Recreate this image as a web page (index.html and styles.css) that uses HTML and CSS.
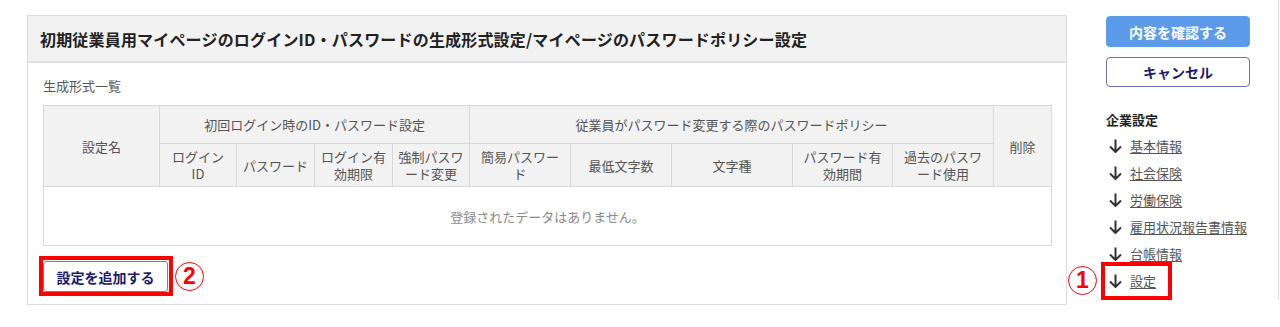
FILE: index.html
```html
<!DOCTYPE html>
<html lang="ja">
<head>
<meta charset="utf-8">
<title>生成形式設定</title>
<link rel="stylesheet" href="styles.css">
</head>
<body>
<div class="page">
  <section class="panel">
    <h1 class="panel-head">初期従業員用マイページのログインID・パスワードの生成形式設定/マイページのパスワードポリシー設定</h1>
    <div class="panel-body">
      <div class="caption">生成形式一覧</div>
      <table class="grid">
        <colgroup>
          <col class="w116"><col class="w77"><col class="w78"><col class="w78"><col class="w77">
          <col class="w101"><col class="w101"><col class="w121"><col class="w100"><col class="w101"><col class="w58">
        </colgroup>
        <thead>
          <tr class="r1">
            <th rowspan="2">設定名</th>
            <th colspan="4">初回ログイン時のID・パスワード設定</th>
            <th colspan="5">従業員がパスワード変更する際のパスワードポリシー</th>
            <th rowspan="2">削除</th>
          </tr>
          <tr class="r2">
            <th>ログイン<br>ID</th>
            <th>パスワード</th>
            <th>ログイン有<br>効期限</th>
            <th>強制パスワ<br>ード変更</th>
            <th>簡易パスワー<br>ド</th>
            <th>最低文字数</th>
            <th>文字種</th>
            <th>パスワード有<br>効期間</th>
            <th>過去のパスワ<br>ード使用</th>
          </tr>
        </thead>
        <tbody>
          <tr class="r3"><td colspan="11">登録されたデータはありません。</td></tr>
        </tbody>
      </table>
      <div class="add-row">
        <div class="mark-box"><button class="btn-add" type="button">設定を追加する</button></div>
        <span class="circ">2</span>
      </div>
    </div>
  </section>
  <aside class="rail">
    <button class="btn-primary" type="button">内容を確認する</button>
    <button class="btn-cancel" type="button">キャンセル</button>
    <div class="nav-title">企業設定</div>
    <ul class="nav">
      <li><svg class="arr" viewBox="0 0 13 14" width="13" height="14"><path d="M6.5 0.5V13M1 7.5l5.5 5.5 5.5-5.5" fill="none" stroke="#333" stroke-width="2"/></svg><a href="#">基本情報</a></li>
      <li><svg class="arr" viewBox="0 0 13 14" width="13" height="14"><path d="M6.5 0.5V13M1 7.5l5.5 5.5 5.5-5.5" fill="none" stroke="#333" stroke-width="2"/></svg><a href="#">社会保険</a></li>
      <li><svg class="arr" viewBox="0 0 13 14" width="13" height="14"><path d="M6.5 0.5V13M1 7.5l5.5 5.5 5.5-5.5" fill="none" stroke="#333" stroke-width="2"/></svg><a href="#">労働保険</a></li>
      <li><svg class="arr" viewBox="0 0 13 14" width="13" height="14"><path d="M6.5 0.5V13M1 7.5l5.5 5.5 5.5-5.5" fill="none" stroke="#333" stroke-width="2"/></svg><a href="#">雇用状況報告書情報</a></li>
      <li><svg class="arr" viewBox="0 0 13 14" width="13" height="14"><path d="M6.5 0.5V13M1 7.5l5.5 5.5 5.5-5.5" fill="none" stroke="#333" stroke-width="2"/></svg><a href="#">台帳情報</a></li>
      <li class="marked"><svg class="arr" viewBox="0 0 13 14" width="13" height="14"><path d="M6.5 0.5V13M1 7.5l5.5 5.5 5.5-5.5" fill="none" stroke="#333" stroke-width="2"/></svg><a href="#">設定</a><span class="mark-frame"></span><span class="circ circ-1">1</span></li>
    </ul>
  </aside>
</div>
</body>
</html>
```
FILE: styles.css
```css
* { box-sizing: border-box; }
html, body { margin: 0; padding: 0; background: #fff; }
body {
  font-family: "Noto Sans CJK JP", "Noto Sans", sans-serif;
  font-size: 13px;
  color: #555;
}
.page {
  display: flex;
  align-items: flex-start;
  padding: 15px 0 0 27px;
  height: 315px;
}
.panel {
  width: 1040px;
  height: 290px;
  border: 1px solid #dcdcdc;
  flex: none;
}
.panel-head {
  margin: 0;
  height: 47px;
  padding: 0 0 0 12px;
  display: flex;
  align-items: center;
  background: #f2f2f2;
  border-bottom: 2px solid #e0e0e0;
  font-size: 16px;
  font-weight: bold;
  color: #222;
  letter-spacing: 0.18px;
}
.panel-body {
  padding: 14px 15px 0 15px;
}
.caption {
  line-height: 18px;
  height: 18px;
  color: #555;
}
.grid {
  margin-top: 10px;
  width: 1008px;
  table-layout: fixed;
  border-collapse: collapse;
}
.w116 { width: 116px; }
.w77 { width: 77px; }
.w78 { width: 78px; }
.w101 { width: 101px; }
.w121 { width: 121px; }
.w100 { width: 100px; }
.w58 { width: 58px; }
.grid th, .grid td {
  border: 1px solid #d9d9d9;
  padding: 0 4px;
  font-weight: normal;
  text-align: center;
  vertical-align: middle;
  line-height: 17px;
  color: #555;
  white-space: nowrap;
}
.grid th { background: #f2f2f2; }
.grid .r1 { height: 38px; }
.grid .r2 { height: 43px; }
.grid .r3 { height: 59px; }
.grid td { color: #8a8a8a; background: #fff; }
.add-row {
  display: flex;
  align-items: center;
  margin-top: 10px;
  margin-left: -4px;
}
.mark-box {
  border: 4px solid #f00;
  padding: 1px 1px 0 0;
}
.btn-add {
  display: block;
  width: 125px;
  height: 31px;
  border: 1px solid #7a7ab8;
  border-radius: 3px;
  background: #fff;
  font-family: inherit;
  font-size: 14px;
  font-weight: bold;
  color: #1c1c6b;
  padding: 0;
}
.circ {
  display: inline-flex;
  align-items: center;
  justify-content: center;
  width: 29px;
  height: 29px;
  border: 1px solid #f00;
  border-radius: 50%;
  color: #f00;
  font-family: "Liberation Sans", sans-serif;
  font-weight: bold;
  font-size: 23px;
  margin-left: 2px;
}
.rail {
  margin-left: 39px;
  width: 173px;
  height: 300px;
  margin-top: -15px;
  padding-top: 16px;
  border-right: 1px solid #dcdcdc;
  display: flex;
  flex-direction: column;
  align-items: flex-start;
}
.btn-primary, .btn-cancel {
  width: 144px;
  font-family: inherit;
  font-size: 14px;
  font-weight: bold;
  border-radius: 4px;
  padding: 0;
}
.btn-primary {
  height: 31px;
  background: #5b9bea;
  border: 1px solid #5b9bea;
  color: #fff;
}
.btn-cancel {
  margin-top: 10px;
  height: 30px;
  background: #fff;
  border: 1px solid #6d6db5;
  color: #1c1c6b;
}
.nav-title {
  margin-top: 24px;
  line-height: 18px;
  font-weight: bold;
  color: #222;
}
.nav {
  list-style: none;
  margin: 3px 0 0;
  padding: 0;
}
.nav li {
  display: flex;
  align-items: center;
  height: 27px;
  padding-left: 3px;
}
.nav .arr { flex: none; margin-right: 8px; }
.nav a {
  color: #555;
  text-decoration: underline;
  text-underline-offset: 2px;
  line-height: 18px;
}
.nav li.marked { position: relative; }
.mark-frame {
  position: absolute;
  left: -5px;
  top: -5px;
  width: 71px;
  height: 38px;
  border: 4px solid #f00;
}
.circ-1 {
  position: absolute;
  left: -38px;
  top: -1px;
  margin: 0;
}
```
